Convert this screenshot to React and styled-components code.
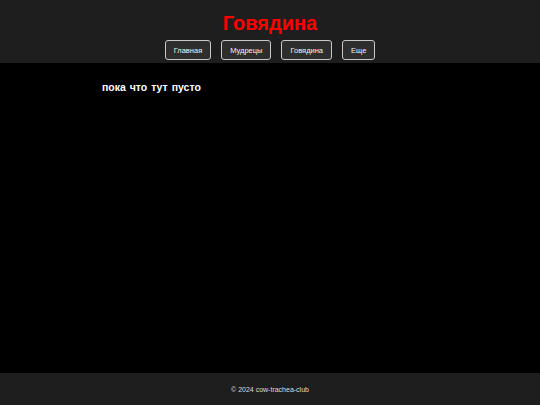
import styled, { createGlobalStyle } from 'styled-components';

const GlobalStyle = createGlobalStyle`
  html, body {
    margin: 0;
    padding: 0;
    background: #000;
  }
  body {
    font-family: "Comic Sans MS", "Liberation Sans", Arial, sans-serif;
  }
`;

const links = ['Главная', 'Мудрецы', 'Говядина', 'Еще'];

function App() {
  return (
    <>
      <GlobalStyle />
      <Page>
        <Header>
          <Title>Говядина</Title>
          <Nav>
            {links.map((l) => (
              <NavButton key={l}>{l}</NavButton>
            ))}
          </Nav>
        </Header>

        <Main>
          <Empty>пока что тут пусто</Empty>
        </Main>

        <Footer>© 2024 cow-trachea-club</Footer>
      </Page>
    </>
  );
}

const Page = styled.div`
  display: flex;
  flex-direction: column;
  min-height: 405px;
  background: #000;
`;

// Header
const Header = styled.header`
  display: flex;
  flex-direction: column;
  align-items: center;
  height: 63px;
  box-sizing: border-box;
  padding-top: 10px;
  background: #1e1e1e;
`;
const Title = styled.h1`
  margin: 0;
  color: #ff0000;
  font-size: 20px;
  font-weight: 700;
  line-height: 26px;
`;
const Nav = styled.nav`
  display: flex;
  gap: 10px;
  margin-top: 4px;
`;
const NavButton = styled.button`
  height: 20px;
  padding: 0 8px;
  border: 1px solid #c8c8c8;
  border-radius: 3px;
  background: #2e2e2e;
  color: #f2f2f2;
  font-family: inherit;
  font-size: 7.5px;
  cursor: pointer;
`;

// Main
const Main = styled.main`
  flex: 1;
  padding: 18px 0 0 102px;
`;
const Empty = styled.p`
  margin: 0;
  color: #fff;
  font-size: 10.5px;
  font-weight: 700;
  word-spacing: 1px;
`;

// Footer
const Footer = styled.footer`
  display: flex;
  align-items: center;
  justify-content: center;
  height: 32px;
  background: #1e1e1e;
  color: #dcdcdc;
  font-size: 7px;
`;

export default App;
